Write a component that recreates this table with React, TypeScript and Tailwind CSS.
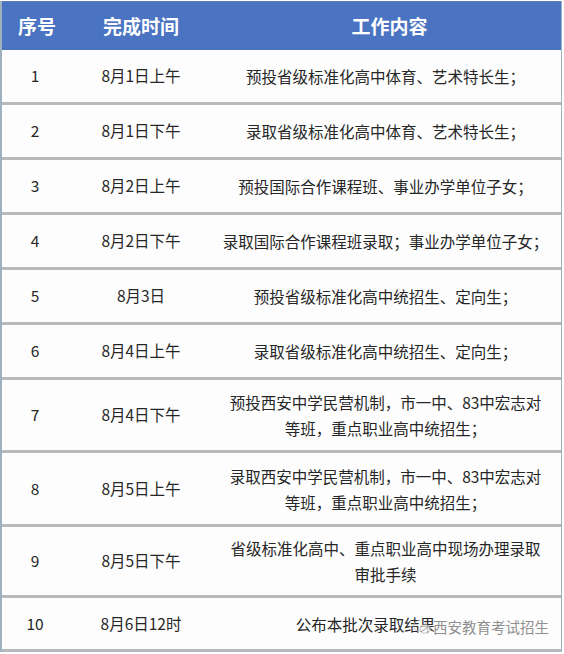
const rows: { no: string; time: string; content: string[]; h: string; pad?: string }[] = [
  { no: "1", time: "8月1日上午", content: ["预投省级标准化高中体育、艺术特长生；"], h: "h-[55px]" },
  { no: "2", time: "8月1日下午", content: ["录取省级标准化高中体育、艺术特长生；"], h: "h-[55px]" },
  { no: "3", time: "8月2日上午", content: ["预投国际合作课程班、事业办学单位子女；"], h: "h-[55px]" },
  { no: "4", time: "8月2日下午", content: ["录取国际合作课程班录取；事业办学单位子女；"], h: "h-[55px]" },
  { no: "5", time: "8月3日", content: ["预投省级标准化高中统招生、定向生；"], h: "h-[55px]" },
  { no: "6", time: "8月4日上午", content: ["录取省级标准化高中统招生、定向生；"], h: "h-[55px]" },
  { no: "7", time: "8月4日下午", content: ["预投西安中学民营机制，市一中、83中宏志对", "等班，重点职业高中统招生；"], h: "h-[73px]" },
  { no: "8", time: "8月5日上午", content: ["录取西安中学民营机制，市一中、83中宏志对", "等班，重点职业高中统招生；"], h: "h-[74px]" },
  { no: "9", time: "8月5日下午", content: ["省级标准化高中、重点职业高中现场办理录取", "审批手续"], h: "h-[71px]" },
  { no: "10", time: "8月6日12时", content: ["公布本批次录取结果"], h: "h-[54px]", pad: "pr-[44px]" },
];

export default function App() {
  return (
    <div
      className="relative w-[564px] h-[654px] bg-white text-[#262626] overflow-hidden"
      style={{ fontFamily: '"Noto Sans CJK SC", "Noto Sans", sans-serif' }}
    >
      <div className="w-[562px] border-l-2 border-r border-[#9fb0bf] bg-[#fdfdfd] mt-[1px]">
        <div className="grid grid-cols-[66px_146px_1fr] h-[49px] items-center bg-[#4a73c2] text-white font-bold text-[19px] border-t border-[#5a7fb8]">
          <div className="text-center pl-1">序号</div>
          <div className="text-center">完成时间</div>
          <div className="text-center pl-1">工作内容</div>
        </div>
        {rows.map((r) => (
          <div
            key={r.no}
            className={`grid grid-cols-[66px_146px_1fr] items-center border-b-[3px] border-[#b6babd] text-[15.5px] ${r.h}`}
          >
            <div className="text-center">{r.no}</div>
            <div className="text-center">{r.time}</div>
            <div className={`text-center leading-[26px] whitespace-nowrap ${r.pad ?? "pr-1"}`}>
              {r.content.map((c, i) => (
                <div key={i}>{c}</div>
              ))}
            </div>
          </div>
        ))}
      </div>
      <div className="absolute left-[413px] top-[619px] flex items-center gap-[2px] whitespace-nowrap text-[14.5px] leading-none text-[#8f8f8f] [text-shadow:0_0_3px_#fff,0_0_3px_#fff,0_0_2px_#fff]">
        <svg width="18" height="16" viewBox="0 0 18 16" className="opacity-70">
          <ellipse cx="7" cy="7" rx="6.5" ry="5.5" fill="none" stroke="#bbb" strokeWidth="1.2" />
          <ellipse cx="12" cy="10" rx="5" ry="4.2" fill="#fff" stroke="#bbb" strokeWidth="1.2" />
        </svg>
        <span>西安教育考试招生</span>
      </div>
    </div>
  );
}
